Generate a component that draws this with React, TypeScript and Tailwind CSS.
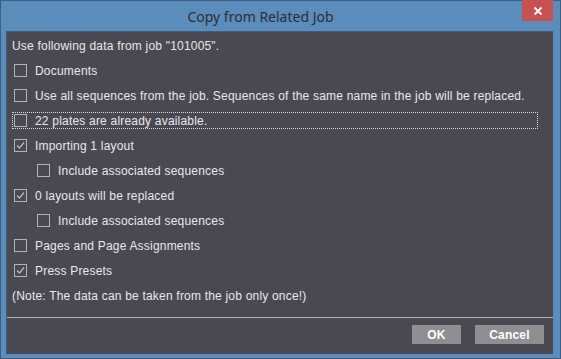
import React from 'react';

// Options listed in the dialog
const items = [
  { label: 'Documents', checked: false, indent: false },
  { label: 'Use all sequences from the job. Sequences of the same name in the job will be replaced.', checked: false, indent: false },
  { label: '22 plates are already available.', checked: false, indent: false, focus: true },
  { label: 'Importing 1 layout', checked: true, indent: false },
  { label: 'Include associated sequences', checked: false, indent: true },
  { label: '0 layouts will be replaced', checked: true, indent: false },
  { label: 'Include associated sequences', checked: false, indent: true },
  { label: 'Pages and Page Assignments', checked: false, indent: false },
  { label: 'Press Presets', checked: true, indent: false },
];

const Box = ({ checked }: { checked: boolean }) => (
  <div className="w-[13px] h-[13px] border border-[#b4b4b8] shrink-0 flex items-center justify-center">
    {checked && (
      <svg width="11" height="11" viewBox="0 0 11 11">
        <path d="M2 5.5 L4.5 8 L9 2.5" fill="none" stroke="#b8b8bc" strokeWidth="1.3" />
      </svg>
    )}
  </div>
);

const App = () => {
  return (
    <div className="w-[561px] h-[359px] bg-[#5a8cbc] border border-[#3f5f80] flex flex-col" style={{ fontFamily: '"Liberation Sans", Arial, sans-serif' }}>
      <div className="h-[30px] shrink-0 relative flex items-center justify-center pr-[40px]">
        <span className="text-[14px] text-[#2e2e33] pt-[1px]" style={{ fontFamily: '"Noto Sans", sans-serif' }}>Copy from Related Job</span>
        <div className="absolute right-[7px] -top-[1px] w-[31px] h-[21px] bg-[#c75050] flex items-center justify-center">
          <svg width="10" height="10" viewBox="0 0 10 10">
            <path d="M1.5 1.5 L8.5 8.5 M8.5 1.5 L1.5 8.5" stroke="#ffffff" strokeWidth="2" />
          </svg>
        </div>
      </div>

      <div className="ml-[5px] w-[547px] h-[323px] bg-[#4a4952] border-l border-t border-[#3e5e7e] flex flex-col text-[12px] text-[#e8e8ea] tracking-[0.2px]">
        <div className="pt-[1px]">
          <div className="h-[25px] flex items-center pl-[5px]">Use following data from job "101005".</div>
          {items.map((item, i) => (
            <div key={i} className={`h-[25px] flex items-center ${item.indent ? 'pl-[30px]' : 'pl-[7px]'}`}>
              {item.focus ? (
                <div className="w-[526px] h-[17px] -ml-[2px] pl-[1px] border border-dotted border-[#d8d8d8] flex items-center gap-[8px]">
                  <Box checked={item.checked} />
                  <span>{item.label}</span>
                </div>
              ) : (
                <div className="flex items-center gap-[8px]">
                  <Box checked={item.checked} />
                  <span>{item.label}</span>
                </div>
              )}
            </div>
          ))}
          <div className="h-[25px] flex items-center pl-[5px]">(Note: The data can be taken from the job only once!)</div>
        </div>

        <div className="mt-[9px] h-px bg-[#b4b4b8]" />

        <div className="flex justify-end gap-[14px] pr-[9px] pt-[7px]">
          <button className="w-[49px] h-[19px] bg-[#8e8e93] text-white font-bold text-[12px]">OK</button>
          <button className="w-[69px] h-[19px] bg-[#8e8e93] text-white font-bold text-[12px]">Cancel</button>
        </div>
      </div>
    </div>
  );
};

export default App;
